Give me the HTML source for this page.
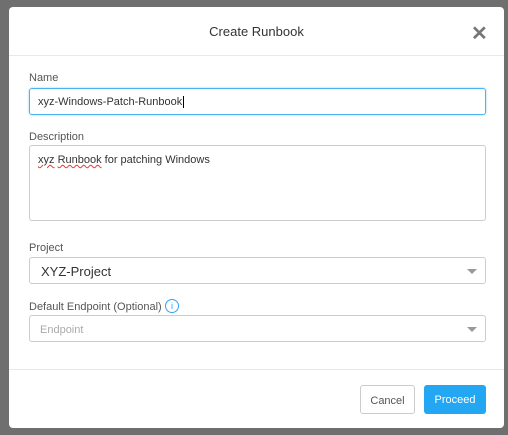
<!DOCTYPE html>
<html><head><style>
body{margin:0;width:508px;height:435px;background:#6f6f6f;font-family:"Liberation Sans",sans-serif;position:relative;overflow:hidden}
.m{position:absolute;left:9px;top:7px;width:495px;height:421px;background:#fff;border-radius:4px}
.a{position:absolute}
.t{left:0;width:495px;top:17px;text-align:center;font-size:13px;color:#333}
.hr{left:0;width:495px;height:1px;background:#e8e8e8}
.l{font-size:11px;color:#555}
.f{left:20px;width:457px;border:1px solid #ccc;border-radius:3px;box-sizing:border-box;font-size:11px;color:#333}
.ar{position:absolute;right:8px;top:11px;width:0;height:0;border-left:5px solid transparent;border-right:5px solid transparent;border-top:5px solid #999}
.b{top:378px;height:29px;border-radius:3px;box-sizing:border-box;font-size:11px;text-align:center;line-height:31px}
</style></head><body>
<div class="m">
<div class="a t">Create Runbook</div>
<div class="a" style="left:462px;top:17px;font-size:20px;color:#777;font-weight:bold;line-height:20px">✕</div>
<div class="a hr" style="top:48px"></div>
<div class="a l" style="left:20px;top:65px">Name</div>
<div class="a f" style="top:81px;height:27px;border-color:#4cb3ee;box-shadow:0 0 2px #8fd0f5;padding:7px 8px">xyz-Windows-Patch-Runbook<span style="border-left:1px solid #000;margin-left:1px"></span></div>
<div class="a l" style="left:20px;top:124px">Description</div>
<div class="a f" style="top:138px;height:76px;padding:8px 8px"><span style="text-decoration:underline wavy #e33;text-decoration-thickness:1px">xyz</span> <span style="text-decoration:underline wavy #e33;text-decoration-thickness:1px">Runbook</span> for patching Windows</div>
<div class="a l" style="left:20px;top:235px">Project</div>
<div class="a f" style="top:250px;height:27px;padding:6px 11px;font-size:13px">XYZ-Project<div class="ar"></div></div>
<div class="a l" style="left:20px;top:294px">Default Endpoint (Optional)</div>
<div class="a" style="left:156px;top:292px;width:12px;height:12px;border:1px solid #2ea5f3;border-radius:50%;color:#2ea5f3;font-size:9px;text-align:center;line-height:12px">i</div>
<div class="a f" style="top:308px;height:27px;padding:8px 10px;color:#aaa">Endpoint<div class="ar"></div></div>
<div class="a hr" style="top:362px"></div>
<div class="a b" style="left:351px;width:55px;border:1px solid #ccc;color:#555">Cancel</div>
<div class="a b" style="left:415px;width:62px;background:#23a7f2;color:#fff;line-height:31px">Proceed</div>
</div>
</body></html>
